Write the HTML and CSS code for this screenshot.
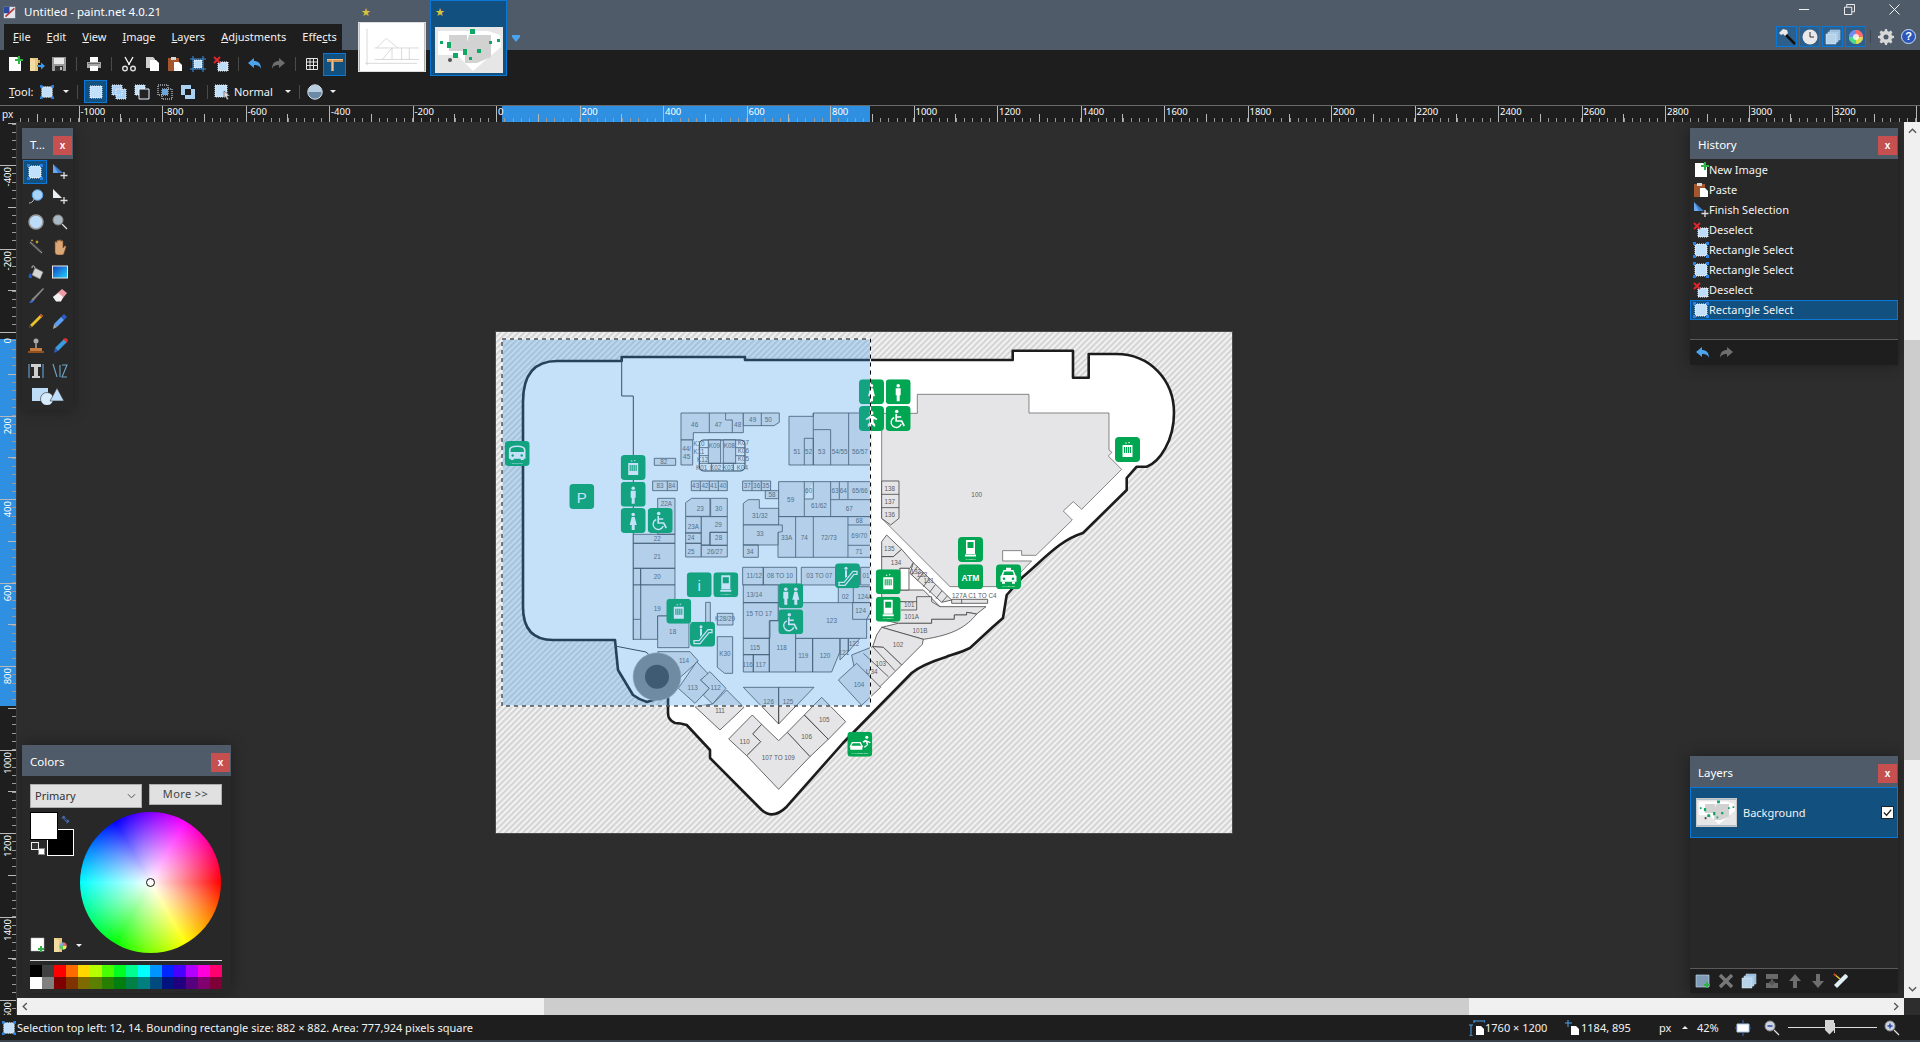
FILE: index.html
```html
<!DOCTYPE html>
<html lang="en">
<head>
<meta charset="utf-8">
<title>Untitled - paint.net 4.0.21</title>
<link rel="stylesheet" href="styles.css">
</head>
<body>
<svg class="defs" width="0" height="0" aria-hidden="true">
<defs>
<symbol id="i-new" viewBox="0 0 16 16"><path d="M2 1h8l4 4v10H2z" fill="#fff"/><path d="M10 1l4 4h-4z" fill="#cfd8dc"/><path d="M11 0h2v3h3v2h-3v3h-2V5H8V3h3z" fill="#2fb344"/></symbol>
<symbol id="i-open" viewBox="0 0 16 16"><path d="M1 2h8v13H1z" fill="#e8c77d"/><path d="M1 2l5 2v11H1z" fill="#f3dca4"/><path d="M9 4h2v3h-2z" fill="#caa45b"/><path d="M8 9h4V6.500l4 3.500-4 3.500V11H8z" fill="#3d9be9"/></symbol>
<symbol id="i-save" viewBox="0 0 16 16"><path d="M1 1h14v14H1z" fill="#9a9a9a"/><path d="M3 2h10v6H3z" fill="#e9e9e9"/><path d="M4 10h8v5H4z" fill="#333"/><path d="M9 11h2v3H9z" fill="#bbb"/></symbol>
<symbol id="i-print" viewBox="0 0 16 16"><path d="M4 1h8v5H4z" fill="#fff"/><path d="M1 6h14v6H1z" fill="#a8a8a8"/><path d="M4 10h8v5H4z" fill="#fff"/><path d="M2 7h12v1H2z" fill="#6a6a6a"/></symbol>
<symbol id="i-cut" viewBox="0 0 16 16"><path d="M4 1l4.500 8M12 1L7.500 9" stroke="#fff" stroke-width="1.300" fill="none"/><circle cx="4" cy="12.500" r="2.300" fill="none" stroke="#ddd" stroke-width="1.400"/><circle cx="12" cy="12.500" r="2.300" fill="none" stroke="#ddd" stroke-width="1.400"/></symbol>
<symbol id="i-copy" viewBox="0 0 16 16"><path d="M2 1h7l2 2v9H2z" fill="#cfcfcf"/><path d="M6 4h6l3 3v8H6z" fill="#fff"/></symbol>
<symbol id="i-paste" viewBox="0 0 16 16"><path d="M1 2h11v13H1z" fill="#a5562c"/><path d="M4 1h5v3H4z" fill="#d8d8d8"/><path d="M7 6h5l3 3v6H7z" fill="#fff"/></symbol>
<symbol id="i-crop" viewBox="0 0 16 16"><path d="M4 4h8v8H4z" fill="#bcdcf7" stroke="#fff" stroke-dasharray="1 1"/><path d="M3 0v16M13 0v16M0 3h16M0 13h16" stroke="#3a8fe0" stroke-width="1" fill="none"/></symbol>
<symbol id="i-desel" viewBox="0 0 16 16"><path d="M5 6h10v9H5z" fill="#bcdcf7" stroke="#fff" stroke-dasharray="1 1"/><path d="M1 1l6 6M7 1L1 7" stroke="#e3262e" stroke-width="1.800"/></symbol>
<symbol id="i-undo" viewBox="0 0 16 16"><path d="M7 2L1 7l6 5V9c4 0 6 1 7 4 0-6-3-8-7-8z" fill="#4aa3ec"/></symbol>
<symbol id="i-redo" viewBox="0 0 16 16"><path d="M9 2l6 5-6 5V9c-4 0-6 1-7 4 0-6 3-8 7-8z" fill="#6e6e6e"/></symbol>
<symbol id="i-grid" viewBox="0 0 16 16"><path d="M2.500 2.500h11v11h-11zM6 2.500v11M9.500 2.500v11M2.500 6h11M2.500 9.500h11" stroke="#e6e6e6" fill="none"/></symbol>
<symbol id="i-ruler" viewBox="0 0 16 16"><path d="M0 3h16v3H7v9H4V6H0z" fill="#d39355"/><path d="M0 3h16v1H6v11H5V4H0z" fill="#efc08e"/></symbol>
<symbol id="i-rect" viewBox="0 0 16 16"><path d="M2 2h12v12H2z" fill="#c3e0fa" stroke="#fff" stroke-dasharray="1 1"/><path d="M0 0h3v3H0zM13 0h3v3h-3zM0 13h3v3H0zM13 13h3v3h-3z" fill="#2a82e4"/></symbol>
<symbol id="i-m1" viewBox="0 0 16 16"><path d="M2 2h12v12H2z" fill="#c3e0fa" stroke="#e8f4ff" stroke-dasharray="1 1"/></symbol>
<symbol id="i-m2" viewBox="0 0 16 16"><path d="M1 1h10v10H1zM5 5h10v10H5z" fill="#a9cff2" stroke="#e8f4ff" stroke-dasharray="1 1"/></symbol>
<symbol id="i-m3" viewBox="0 0 16 16"><path d="M1 1h10v10H1z" fill="#c3e0fa" stroke="#e8f4ff" stroke-dasharray="1 1"/><path d="M5 5h10v10H5z" fill="#222" stroke="#e8f4ff"/></symbol>
<symbol id="i-m4" viewBox="0 0 16 16"><path d="M1 1h10v10H1z" fill="none" stroke="#e8f4ff" stroke-dasharray="1 1"/><path d="M5 5h10v10H5z" fill="none" stroke="#e8f4ff" stroke-dasharray="1 1"/><path d="M5 5h6v6H5z" fill="#6fa6d8"/></symbol>
<symbol id="i-m5" viewBox="0 0 16 16"><path d="M1 1h10v4H5v6H1zM11 5h4v10H5v-4h6z" fill="#a9cff2"/><path d="M5 5h6v6H5z" fill="#1e1e1e"/></symbol>
<symbol id="i-mode" viewBox="0 0 18 16"><path d="M1 1h12v12H1z" fill="#c3e0fa" stroke="#e8f4ff" stroke-dasharray="1 1"/><path d="M10 7l6 5h-3l1.500 3-1.500.8-1.500-3L10 14z" fill="#ddd" stroke="#333" stroke-width=".5"/></symbol>
<symbol id="i-aa" viewBox="0 0 16 16"><circle cx="8" cy="8" r="7.200" fill="#6c89a8" stroke="#dfe7ee"/><path d="M1 8a7 7 0 0 1 14 0z" fill="#b9cee0"/></symbol>
<symbol id="i-movesel" viewBox="0 0 16 16"><path d="M1 0l10 9H1z" fill="#3c7fd0"/><path d="M1 0l5 9H1z" fill="#69a8ea"/><path d="M12 8v7M8.500 11.500h7" stroke="#ddd" stroke-width="1.300"/></symbol>
<symbol id="i-lasso" viewBox="0 0 16 16"><circle cx="9.500" cy="6" r="5.300" fill="#a8d2f7" stroke="#5a9fe0"/><path d="M6 10c-1 3-3 4-5 4" stroke="#bbb" fill="none"/></symbol>
<symbol id="i-ell" viewBox="0 0 16 16"><circle cx="8" cy="8" r="7" fill="#bcdcf7" stroke="#9a9a9a" stroke-width="1.500"/></symbol>
<symbol id="i-zoom" viewBox="0 0 16 16"><circle cx="6" cy="6" r="5" fill="#aab8c4" stroke="#888"/><path d="M10 10l5 5" stroke="#ddd" stroke-width="1.200"/></symbol>
<symbol id="i-move" viewBox="0 0 16 16"><path d="M1 0l9 9H1z" fill="#e9eef3"/><path d="M12 8v7M8.500 11.500h7" stroke="#ddd" stroke-width="1.300"/></symbol>
<symbol id="i-wand" viewBox="0 0 16 16"><path d="M2 3l12 11" stroke="#444" stroke-width="3"/><path d="M2 3l12 11" stroke="#999" stroke-width="1"/><path d="M9 1l.6 1.500L11 3l-1.400.6L9 5l-.6-1.400L7 3l1.400-.5zM4 0l.4 1 1 .4-1 .4-.4 1-.4-1-1-.4 1-.4z" fill="#f2c53d"/></symbol>
<symbol id="i-hand" viewBox="0 0 16 16"><path d="M3 8V3.500a1 1 0 0 1 2 0V2a1 1 0 0 1 2 0v-.2a1 1 0 0 1 2 0V2.500a1 1 0 0 1 2 0V9l1.500-2a1 1 0 0 1 1.500 1L12 14a2 2 0 0 1-2 2H6a3 3 0 0 1-3-3z" fill="#dba777" stroke="#7c4c27" stroke-width=".6"/></symbol>
<symbol id="i-fill" viewBox="0 0 16 16"><path d="M7 4l8 4-3 7-8-4z" fill="#d6d6d6" stroke="#888" stroke-width=".6"/><path d="M7 4c-1-3-3-3-3 0" stroke="#ccc" fill="none"/><path d="M3 9c-2 1-3 3-2 5h3z" fill="#2a5cc8"/></symbol>
<symbol id="i-grad" viewBox="0 0 16 16"><defs><linearGradient id="gr" x1="0" y1="0" x2="1" y2="1"><stop offset="0" stop-color="#0f3fbf"/><stop offset="1" stop-color="#27d3ff"/></linearGradient></defs><rect x=".5" y="2" width="15" height="12" fill="url(#gr)" stroke="#e8e8e8"/></symbol>
<symbol id="i-brush" viewBox="0 0 16 16"><path d="M15 0L5 10l1.500 1.500L16 1z" fill="#8a8a8a"/><path d="M5 10c-2 1-2 3-4 5 3 0 5-1 5.500-3.500z" fill="#3d6fd0"/><path d="M5 10l1.500 1.500-1 1-1.500-1.500z" fill="#c98a33"/></symbol>
<symbol id="i-eraser" viewBox="0 0 16 16"><path d="M10 1l5 4-5.500 7H4L1 9z" fill="#ee9aa7"/><path d="M1 9l5.500-4L11 9l-2 4.500H4z" fill="#f2f2f2"/></symbol>
<symbol id="i-pencil" viewBox="0 0 16 16"><path d="M13 1l2 2L4 14l-3 1 1-3z" fill="#e8c22d"/><path d="M13 1l2 2-1.500 1.500-2-2z" fill="#d04545"/><path d="M1 15l1-3 2 2z" fill="#222"/></symbol>
<symbol id="i-picker" viewBox="0 0 16 16"><path d="M12 1l3 3-3 3-3-3z" fill="#2a5cc8"/><path d="M9 4l3 3-7 7-3-3z" fill="#5d9ff0"/><path d="M2 11l3 3-4 2z" fill="#aaa"/></symbol>
<symbol id="i-stamp" viewBox="0 0 16 16"><circle cx="8" cy="3" r="2.500" fill="#aaa"/><path d="M7 5h2v5H7z" fill="#888"/><path d="M2 10h12v3H2z" fill="#c87b3a"/><path d="M0 13h16v2H0z" fill="#8f5023"/></symbol>
<symbol id="i-recolor" viewBox="0 0 16 16"><path d="M12 1l3 3-9 9-3-3z" fill="#3b9be0"/><path d="M11 1l4 4 1-3-2-2z" fill="#d33"/><path d="M3 10l3 3-4 2z" fill="#2a5cc8"/></symbol>
<symbol id="i-text" viewBox="0 0 16 16"><path d="M1 1v14M15 1v14" stroke="#6fb0ea" fill="none"/><path d="M3 1h10v3h-3v9h2v2H4v-2h2V4H3z" fill="#cfcfcf"/></symbol>
<symbol id="i-line" viewBox="0 0 16 16"><path d="M1 1l4 13M8 14V2M10 2h5l-5 12h5" stroke="#6fa6c6" stroke-width="1.100" fill="none"/></symbol>
<symbol id="i-shapes" viewBox="0 0 34 18"><path d="M1 1h16v13H1z" fill="#bcdcf7"/><circle cx="16" cy="12" r="6.500" fill="#d6ecfd" stroke="#2e2e2e" stroke-width=".6"/><path d="M26 1l7 13H19z" fill="#bcdcf7" stroke="#2e2e2e" stroke-width=".6"/></symbol>
<symbol id="i-hammer" viewBox="0 0 18 18"><path d="M6 5l11 11" stroke="#111" stroke-width="2.500"/><path d="M1 5l4-4 4 1 1 3-3 3-2-2-2 1z" fill="#e9e9e9"/></symbol>
<symbol id="i-clock" viewBox="0 0 16 16"><circle cx="8" cy="8" r="7.500" fill="#e9e9e9"/><path d="M8 3v5h4" stroke="#333" stroke-width="1" fill="none"/></symbol>
<symbol id="i-layers" viewBox="0 0 16 16"><path d="M5 1h10v10H5z" fill="#8fb4d6" stroke="#cfe2f2" stroke-width=".5"/><path d="M3 3h10v10H3z" fill="#a3c5e2" stroke="#cfe2f2" stroke-width=".5"/><path d="M1 5h10v10H1z" fill="#b7d3ea" stroke="#e2eef8" stroke-width=".5"/></symbol>
<symbol id="i-wheel" viewBox="0 0 16 16"><circle cx="8" cy="8" r="7" fill="#dd88dd"/><path d="M8 8L8 1a7 7 0 0 1 7 7z" fill="#ff6b6b"/><path d="M8 8h7a7 7 0 0 1-7 7z" fill="#d8e14c"/><path d="M8 8v7a7 7 0 0 1-7-7z" fill="#49dc8a"/><path d="M8 8H1a7 7 0 0 1 7-7z" fill="#6d8df0"/><circle cx="8" cy="8" r="3" fill="#fff" opacity=".8"/></symbol>
<symbol id="i-gear" viewBox="0 0 16 16"><path d="M7 0h2l.4 2 1.600.7L12.700 1.500l1.800 1.800-1.200 1.700.7 1.600 2 .4v2l-2 .4-.7 1.600 1.200 1.700-1.800 1.800-1.700-1.200-1.600.7-.4 2H7l-.4-2-1.600-.7-1.700 1.200L1.500 12.700l1.200-1.700L2 9.400 0 9V7l2-.4.7-1.600L1.500 3.300l1.800-1.800L5 2.700l1.600-.7z" fill="#d8d8d8"/><circle cx="8" cy="8" r="2.500" fill="#4f5a68"/></symbol>
<symbol id="i-dim" viewBox="0 0 16 16"><path d="M5 1h11M5 0v3M16 0v3M2 5v11M0 5h4M0 16h4" stroke="#4aa3ec" fill="none"/><path d="M7 6h5l3 3v6H7z" fill="#fff"/></symbol>
<symbol id="i-pos" viewBox="0 0 16 16"><path d="M3 0v7M0 3h7" stroke="#4aa3ec" fill="none"/><path d="M6 6h5l3 3v6H6z" fill="#fff"/></symbol>
<symbol id="i-fit" viewBox="0 0 16 16"><path d="M2 4h12v8H2z" fill="#fff" stroke="#a8c8ee"/><path d="M8 0v3M8 13v3M0 8h2M14 8h2" stroke="#3a66d0"/></symbol>
<symbol id="i-zo" viewBox="0 0 16 16"><circle cx="6" cy="6" r="5" fill="#cdd6e0" stroke="#8b8b8b"/><path d="M3.500 6h5" stroke="#2b4aa8" stroke-width="1.500"/><path d="M10 10l5 5" stroke="#ddd" stroke-width="1.200"/></symbol>
<symbol id="i-zi" viewBox="0 0 16 16"><circle cx="6" cy="6" r="5" fill="#cdd6e0" stroke="#8b8b8b"/><path d="M3.500 6h5M6 3.500v5" stroke="#2b4aa8" stroke-width="1.500"/><path d="M10 10l5 5" stroke="#ddd" stroke-width="1.200"/></symbol>
<symbol id="i-lnew" viewBox="0 0 16 16"><path d="M1 2h13v12H1z" fill="#7f9bb5" stroke="#cfe2f2" stroke-width=".6"/><path d="M11 9h2v2h2v2h-2v2h-2v-2H9v-2h2z" fill="#2fb344"/></symbol>
<symbol id="i-ldel" viewBox="0 0 16 16"><path d="M2 2l12 12M14 2L2 14" stroke="#777" stroke-width="3.500"/></symbol>
<symbol id="i-lmerge" viewBox="0 0 16 16"><path d="M2 1h12v5H2zM2 10h12v5H2z" fill="#6a6a6a"/><path d="M8 5v6M5.500 8.500L8 11l2.500-2.500" stroke="#555" stroke-width="2" fill="none"/></symbol>
<symbol id="i-lup" viewBox="0 0 16 16"><path d="M8 1l6 7h-4v7H6V8H2z" fill="#6e6e6e"/></symbol>
<symbol id="i-ldown" viewBox="0 0 16 16"><path d="M8 15l6-7h-4V1H6v7H2z" fill="#6e6e6e"/></symbol>
<symbol id="i-lprop" viewBox="0 0 16 16"><path d="M14 2l-2-1L1 12l3 3L15 4z" fill="#dff0f7"/><path d="M1 1l6 5" stroke="#e8c22d" stroke-width="1.600"/><path d="M1 1l2 1.700" stroke="#d33" stroke-width="1.600"/></symbol>
<symbol id="i-sw" viewBox="0 0 16 16"><path d="M1 1h13v13H1z" fill="#fff" stroke="#bbb" stroke-width=".5"/><path d="M10 9h2v2h2v2h-2v2h-2v-2H8v-2h2z" fill="#2fb344"/></symbol>
<symbol id="i-pal" viewBox="0 0 16 16"><path d="M1 1h8v14H1z" fill="#e8c77d"/><path d="M1 1l5 2v12H1z" fill="#f3dca4"/><circle cx="10" cy="9" r="3.500" fill="#8ac"/><path d="M10 9V5.500a3.500 3.500 0 0 1 3.500 3.500z" fill="#e66"/><path d="M10 9h3.500a3.500 3.500 0 0 1-3.500 3.500z" fill="#ee6"/><path d="M10 9v3.500A3.500 3.500 0 0 1 6.500 9z" fill="#5c5"/></symbol>
<symbol id="i-appicon" viewBox="0 0 16 16"><path d="M1 1h14v14H1z" fill="#dfe6ee"/><path d="M1 1h7v8H1z" fill="#2a4aa0"/><path d="M3 13L14 3" stroke="#b33" stroke-width="2"/></symbol>
<symbol id="t-map" viewBox="0 0 68 46"><path d="M0 0h68v46H0z" fill="#e6e6e6"/><path d="M3 4h50l12 4 1 12-28 24L22 28H3z" fill="#fff"/><path d="M14 8h18v16H14zM34 8h22v22L42 36H30V22z" fill="#d2d2d2"/><path d="M5 14h3v3H5zM12 15h4v6h-4zM35 2h5v5h-5zM18 26h5v5h-5zM28 22h4v6h-4zM42 22h4v4h-4zM54 14h3v3h-3zM34 30h3v3h-3zM62 12h3v3h-3z" fill="#11a866"/><circle cx="15" cy="33" r="2" fill="#555"/></symbol>
<symbol id="t-plan" viewBox="0 0 68 50"><path d="M0 0h68v50H0z" fill="#fff"/><path d="M8 6v38M6 42h54M16 26h46M16 38h46M34 26v12M44 26v12M52 26v12M18 26l10-10 12 10M24 38l10-12" stroke="#cfcfcf" stroke-width=".8" fill="none"/></symbol>

<pattern id="hatch" width="4.200" height="4.200" patternUnits="userSpaceOnUse" patternTransform="rotate(-45)"><rect width="4.200" height="4.200" fill="#f2f2f2"/><rect width="4.200" height="2.100" fill="#d4d4d4"/></pattern>

<symbol id="g-base" viewBox="0 0 25 25"><rect width="25" height="25" rx="4" fill="#00a651"/></symbol>
<symbol id="g-lift" viewBox="0 0 25 25"><rect width="25" height="25" rx="4" fill="#00a651"/><path d="M7.500 8h10v12h-10z" fill="#fff"/><path d="M9 10h7v6H9z" fill="#00a651"/><path d="M10.500 10v6M12.500 10v6M14.500 10v6" stroke="#fff" stroke-width=".8"/><path d="M10 6.500l1-1.500 1 1.500zM13 5l1 1.500L15 5z" fill="#fff"/></symbol>
<symbol id="g-male" viewBox="0 0 25 25"><rect width="25" height="25" rx="4" fill="#00a651"/><circle cx="12.500" cy="6.500" r="1.800" fill="#fff"/><path d="M10 9h5v7h-1v6h-3v-6h-1z" fill="#fff"/></symbol>
<symbol id="g-female" viewBox="0 0 25 25"><rect width="25" height="25" rx="4" fill="#00a651"/><circle cx="12.500" cy="6.500" r="1.800" fill="#fff"/><path d="M11 9h3l2 8h-2v5h-3v-5H9z" fill="#fff"/></symbol>
<symbol id="g-baby" viewBox="0 0 25 25"><rect width="25" height="25" rx="4" fill="#00a651"/><circle cx="12.500" cy="7" r="2" fill="#fff"/><path d="M10.500 10h4l4 3-1 1-3-1v3l2 3-1 2-3-3-3 3-1-2 2-3v-3l-3 1-1-1z" fill="#fff"/></symbol>
<symbol id="g-dis" viewBox="0 0 25 25"><rect width="25" height="25" rx="4" fill="#00a651"/><circle cx="11" cy="5.500" r="1.800" fill="#fff"/><path d="M10.500 8v7h5.500l2.500 5" stroke="#fff" stroke-width="1.700" fill="none"/><path d="M10.500 11h5" stroke="#fff" stroke-width="1.400"/><path d="M8.500 11.500a5.200 5.200 0 1 0 7 6.500" stroke="#fff" stroke-width="1.400" fill="none"/></symbol>
<symbol id="g-kiosk" viewBox="0 0 25 25"><rect width="25" height="25" rx="4" fill="#00a651"/><path d="M8 3h9v14H8z" fill="#fff"/><path d="M9.500 5h6v6h-6z" fill="#00a651"/><path d="M7 17.500h11v2H7z" fill="#fff"/><text x="12.500" y="22.500" class="tiny">CARTEXT</text></symbol>
<symbol id="g-esc" viewBox="0 0 25 25"><rect width="25" height="25" rx="4" fill="#00a651"/><path d="M4 19h5L18 8h4v3h-3l-9 11H4z" fill="none" stroke="#fff" stroke-width="1.300"/><circle cx="11" cy="5" r="1.500" fill="#fff"/><path d="M10 7h2v6l-2 2z" fill="#fff"/></symbol>
<symbol id="g-bus" viewBox="0 0 25 25"><rect width="25" height="25" rx="4" fill="#00a651"/><path d="M5 9c0-5 15-5 15 0v8H5z" fill="none" stroke="#fff" stroke-width="1.600"/><path d="M5 11h15v6H5z" fill="#fff"/><circle cx="8" cy="14.500" r="1.200" fill="#00a651"/><circle cx="17" cy="14.500" r="1.200" fill="#00a651"/><path d="M6 17h3v2H6zM16 17h3v2h-3z" fill="#fff"/><text x="12.500" y="23" class="tiny">BUS STOP</text></symbol>
<symbol id="g-taxi" viewBox="0 0 25 25"><rect width="25" height="25" rx="4" fill="#00a651"/><path d="M10 3.500h5V6h-5z" fill="#fff"/><path d="M8 6.500h9l2 5H6z" fill="none" stroke="#fff" stroke-width="1.500"/><path d="M4.500 11.500h16v6h-16z" fill="#fff"/><circle cx="8" cy="14.500" r="1.300" fill="#00a651"/><circle cx="17" cy="14.500" r="1.300" fill="#00a651"/><path d="M6 17.500h3v2H6zM16 17.500h3v2h-3z" fill="#fff"/><text x="12.500" y="23" class="tiny">TAXI STAND</text></symbol>
<symbol id="g-exit" viewBox="0 0 25 25"><rect width="25" height="25" rx="4" fill="#00a651"/><path d="M5 11h8l2 4H3z" fill="none" stroke="#fff" stroke-width="1.200"/><path d="M3 14h12v4H3z" fill="#fff"/><circle cx="19.500" cy="5.500" r="1.500" fill="#fff"/><path d="M18 8l-3 2 1.500 1 2-1 1 3-3 2 1 1 3.500-3-.8-3 2 1.500 1.500-1z" fill="#fff"/><text x="12.500" y="22.500" class="tiny">TAXI DROP OFF</text></symbol>
<symbol id="g-wc" viewBox="0 0 25 25"><rect width="25" height="25" rx="4" fill="#00a651"/><circle cx="7.500" cy="6" r="1.800" fill="#fff"/><path d="M5 8.500h5v7H9v6H6v-6H5z" fill="#fff"/><circle cx="17.500" cy="6" r="1.800" fill="#fff"/><path d="M16 8.500h3l2 8h-2v5h-3v-5h-2z" fill="#fff"/></symbol>
</defs>
</svg>

<div class="app">
  <header class="titlebar">
    <div class="title-left">
      <div class="title-row"><svg class="ic16"><use href="#i-appicon"/></svg><span class="title-text">Untitled - paint.net 4.0.21</span></div>
      <nav class="menu"><span><u>F</u>ile</span><span><u>E</u>dit</span><span><u>V</u>iew</span><span><u>I</u>mage</span><span><u>L</u>ayers</span><span><u>A</u>djustments</span><span>Effe<u>c</u>ts</span></nav>
    </div>
    <div class="doc-tab"><span class="star">★</span><svg class="thumb-plan"><use href="#t-plan"/></svg></div>
    <div class="doc-tab doc-active"><span class="star">★</span><svg class="thumb-map"><use href="#t-map"/></svg></div>
    <div class="tab-more"><span class="tab-more-caret"></span></div>
    <div class="title-right">
      <div class="winbtns">
        <svg class="win" viewBox="0 0 12 12"><path d="M0 6h11" stroke="#fff"/></svg>
        <svg class="win" viewBox="0 0 12 12"><path d="M.500 3.500h8v8h-8zM3 3V.500h8.500v8H9" stroke="#fff" fill="none"/></svg>
        <svg class="win" viewBox="0 0 12 12"><path d="M.500.500l11 11M11.500.500l-11 11" stroke="#fff" fill="none"/></svg>
      </div>
      <div class="wintools">
        <span class="toggle"><svg class="ic18"><use href="#i-hammer"/></svg></span>
        <span class="toggle"><svg class="ic16"><use href="#i-clock"/></svg></span>
        <span class="toggle"><svg class="ic16"><use href="#i-layers"/></svg></span>
        <span class="toggle"><svg class="ic16"><use href="#i-wheel"/></svg></span>
        <span class="tsep"></span>
        <svg class="ic16 gear"><use href="#i-gear"/></svg>
        <span class="help">?</span>
      </div>
    </div>
  </header>

  <div class="toolbar tb1">
    <span class="b b22"><svg class="ic16"><use href="#i-new"/></svg></span>
    <span class="b b22"><svg class="ic16"><use href="#i-open"/></svg></span>
    <span class="b b22"><svg class="ic16"><use href="#i-save"/></svg></span>
    <span class="sep s12"></span>
    <span class="b"><svg class="ic16"><use href="#i-print"/></svg></span>
    <span class="sep s12"></span>
    <span class="b"><svg class="ic16"><use href="#i-cut"/></svg></span>
    <span class="b"><svg class="ic16"><use href="#i-copy"/></svg></span>
    <span class="b"><svg class="ic16"><use href="#i-paste"/></svg></span>
    <span class="b"><svg class="ic16"><use href="#i-crop"/></svg></span>
    <span class="b"><svg class="ic16"><use href="#i-desel"/></svg></span>
    <span class="sep s11"></span>
    <span class="b"><svg class="ic16"><use href="#i-undo"/></svg></span>
    <span class="b"><svg class="ic16"><use href="#i-redo"/></svg></span>
    <span class="sep s11"></span>
    <span class="b"><svg class="ic16"><use href="#i-grid"/></svg></span>
    <span class="b on"><svg class="ic16"><use href="#i-ruler"/></svg></span>
  </div>
  <div class="toolbar tb2">
    <span class="tool-label"><u>T</u>ool:</span>
    <span class="b b16"><svg class="ic14"><use href="#i-rect"/></svg></span>
    <span class="caret c-tool"></span>
    <span class="sep s-a"></span>
    <span class="b on"><svg class="ic16"><use href="#i-m1"/></svg></span>
    <span class="b"><svg class="ic16"><use href="#i-m2"/></svg></span>
    <span class="b"><svg class="ic16"><use href="#i-m3"/></svg></span>
    <span class="b"><svg class="ic16"><use href="#i-m4"/></svg></span>
    <span class="b"><svg class="ic16"><use href="#i-m5"/></svg></span>
    <span class="sep s-b"></span>
    <svg class="ic-mode"><use href="#i-mode"/></svg>
    <span class="mode-text">Normal</span>
    <span class="caret c-mode"></span>
    <span class="sep s-c"></span>
    <svg class="ic16 ic-aa"><use href="#i-aa"/></svg>
    <span class="caret c-aa"></span>
  </div>

  <main class="stage">
    <div class="corner">px</div>
    <div class="ruler-h">
      <div class="band-h"></div>
      <div class="hmarks">
        <span class="hm"></span><span class="hm">-1000</span><span class="hm">-800</span><span class="hm">-600</span><span class="hm">-400</span><span class="hm">-200</span><span class="hm">0</span><span class="hm">200</span><span class="hm">400</span><span class="hm">600</span><span class="hm">800</span><span class="hm">1000</span><span class="hm">1200</span><span class="hm">1400</span><span class="hm">1600</span><span class="hm">1800</span><span class="hm">2000</span><span class="hm">2200</span><span class="hm">2400</span><span class="hm">2600</span><span class="hm">2800</span><span class="hm">3000</span><span class="hm">3200</span><span class="hm"></span>
      </div>
    </div>
    <div class="ruler-v">
      <div class="band-v"></div>
      <div class="vmarks">
        <div class="vm"></div><div class="vm"><span>-400</span></div><div class="vm"><span>-200</span></div><div class="vm"><span>0</span></div><div class="vm"><span>200</span></div><div class="vm"><span>400</span></div><div class="vm"><span>600</span></div><div class="vm"><span>800</span></div><div class="vm"><span>1000</span></div><div class="vm"><span>1200</span></div><div class="vm"><span>1400</span></div><div class="vm"><span>1600</span></div>
      </div>
    </div>

    <section class="workspace">
      <svg class="canvas" viewBox="496 332 736 501" width="736" height="501">
        <rect x="496" y="332" width="736" height="501" fill="url(#hatch)"/>
        <path class="outline" d="M557 361L621.700 361L621.700 357L745 357L745 360L1012.700 360L1012.700 350.700L1073 350.700L1073 377.700L1088.700 377.700L1088.700 354L1116 354C1150 354 1174 380 1174 413C1174 440 1160 462 1146.700 466.700L1136.700 466.700L1126.700 478L1126.700 490L1083 533C1060 540 1045 558 1023 576.700L1006.700 595L1003 618L993 626.700L970 648C960 653 950 655 946.700 656.700C930 662 920 666 911.700 673L843 743L786.700 806.700Q773 820 761.700 810L710 758L710 750L686.700 725Q680 723 675 723Q668 720 668 713L668 695L647 702C640 700 637 698 633 695L618 670L615 640L553 640Q523 640 523 607L523 401.700Q523 361 557 361Z"/>
        <path class="thin" d="M621.700 360V396H633.300V640M615 646L646 652L655 660"/>

        <g transform="translate(860 325) scale(.3333)" class="units">
          <path class="u2" d="M172 265V208H507V264H747V375L756 382L745 393L785 433L665 553L640 530L610 558L637 585L528 691H485V677H428V708H515L440 785H270L65 580V265Z"/>
          <path d="M65 468H117V580L92 600L65 580ZM65 508H117M65 548H117"/>
          <text x="350" y="515">100</text><text x="89" y="497">138</text><text x="89" y="537">137</text><text x="89" y="577">136</text>
        </g>
        <g transform="translate(860 540) scale(.3333)" class="units">
          <path d="M65 5L80-15L125 28L100 50H65Z"/>
          <path d="M65 50H100L125 28L160 68L150 85H120V150H190L240 200V205L123 185H65Z"/>
          <path class="wh" d="M120 85H147V150H120Z"/>
          <path d="M160 68L275 180L245 187L150 100Z"/>
          <path class="ln" d="M172 80L155 105M190 98L172 122M208 116L190 140M226 134L208 158M246 152L228 176M262 168L246 186"/>
          <path d="M275 178H383V190H275ZM305 178V190"/>
          <path d="M123 185H170V170H215V185L240 200H378L350 222L320 217V225H283V238H215V250H115L70 240L65 185Z"/>
          <path class="ln" d="M123 210H170V185"/>
          <path d="M65 262L115 250H215V238H283V225H320V217L350 222C320 260 280 285 190 298Z"/>
          <path d="M65 262L190 298L187 313L125 375L70 322L38 320L50 285Z"/>
          <path d="M-25 345L38 320L70 322L125 375L60 440L0 470Z"/>
          <path class="ln" d="M38 320L105 392M10 340L85 410"/>
          <text x="88" y="34">135</text><text x="108" y="74">134</text><text x="148" y="202">101</text><text x="155" y="237">101A</text><text x="180" y="279">101B</text><text x="114" y="320">102</text><text x="62" y="378">103</text><text x="343" y="175">127A C1 TO C4</text><text x="167" y="102">133</text><text x="186" y="112">132</text><text x="206" y="130">131</text>
        </g>

        <g transform="translate(490 325) scale(.3333)" class="units">
          <path d="M573 264H760V323H610V345H573ZM658 264V323M707 264V285H727V323"/>
          <path d="M573 345H608V420H573Z"/>
          <path d="M760 264H868V292L852 302H760ZM814 264V302"/>
          <path class="kiosk" d="M642 345H750Q765 345 765 360V423Q765 438 750 438H642Q628 438 628 423V360Q628 345 642 345Z"/>
          <path d="M655 345H692V415H655ZM700 345H737V415H700Z"/>
          <path class="ln" d="M628 368H655M628 392H655M628 415H765M737 368H765M737 392H765M665 415V438M700 415V438M730 415V438"/>
          <path d="M493 400H557V421H493Z"/>
          <path d="M488 468H562V497H488ZM532 468V497"/>
          <path d="M604 468H712V497H604ZM631 468V497M658 468V497M685 468V497"/>
          <path d="M758 468H842V497H758ZM786 468V497M814 468V497"/>
          <path d="M826 497H866V521H826Z"/>
          <path d="M897 274H970V264H1142V420H897ZM943 340H970V420M943 340V420M970 264V420M970 314H1022V420M1076 264V420"/>
          <path d="M866 470H1142V575H866ZM943 470V575M943 522H970V470M1022 470V575M1048 470V522M1074 470V522M1022 524H1142"/>
          <path d="M864 575H1142V697H864ZM917 575V697M970 575V697M1074 575V697M1074 600H1142M1074 661H1142"/>
          <path d="M760 535L775 524H808V550H866V600H760Z"/>
          <path d="M760 600H877V620L864 622V660H760ZM760 660H805V697H760Z"/>
          <path d="M587 533L605 520H660V574H587ZM662 520H712V575H662Z"/>
          <path d="M587 575H634V624H587ZM587 624H634V655H587ZM587 655H634V696H587Z"/>
          <path d="M634 575H712V622H660V660H634ZM660 622H712V661H660ZM634 661H712V696H634Z"/>
          <path d="M503 520H555V628H503ZM430 628H555V655H430ZM430 655H555V730H430ZM452 730H555V780H452ZM430 730H452V780H430Z"/>
          <path d="M758 727H820V780H758ZM820 727H920V780H820ZM934 727H1040V780H934ZM1112 727H1142V780H1112Z"/>
          <g>
            <text x="614" y="305">46</text><text x="685" y="305">47</text><text x="743" y="305">48</text><text x="788" y="290">49</text><text x="835" y="290">50</text><text x="590" y="378">44/</text><text x="590" y="402">45</text>
            <text x="627" y="362">K10</text><text x="627" y="386">K11</text><text x="638" y="410">K12</text><text x="635" y="436">K01</text><text x="677" y="436">K02</text><text x="715" y="436">K03</text><text x="757" y="436">K04</text><text x="760" y="409">K05</text><text x="760" y="385">K06</text><text x="760" y="361">K07</text><text x="673" y="368">K09</text><text x="718" y="368">K08</text>
            <text x="521" y="417">82</text><text x="510" y="489">83</text><text x="545" y="489">84</text><text x="617" y="489">43</text><text x="645" y="489">42</text><text x="671" y="489">41</text><text x="699" y="489">40</text><text x="772" y="489">37</text><text x="800" y="489">36</text><text x="827" y="489">35</text><text x="846" y="515">58</text>
            <text x="921" y="387">51</text><text x="956" y="387">52</text><text x="995" y="387">53</text><text x="1049" y="387">54/55</text><text x="1110" y="387">56/57</text>
            <text x="902" y="531">59</text><text x="956" y="503">60</text><text x="987" y="548">61/62</text><text x="1035" y="503">63</text><text x="1060" y="503">64</text><text x="1110" y="503">65/66</text><text x="1078" y="557">67</text><text x="1108" y="595">68</text><text x="1108" y="638">69/70</text><text x="1107" y="686">71</text>
            <text x="810" y="580">31/32</text><text x="810" y="633">33</text><text x="890" y="646">33A</text><text x="943" y="646">74</text><text x="1017" y="646">72/73</text><text x="780" y="686">34</text>
            <text x="631" y="557">23</text><text x="686" y="557">30</text><text x="610" y="611">23A</text><text x="603" y="646">24</text><text x="603" y="686">25</text><text x="685" y="606">29</text><text x="686" y="646">28</text><text x="675" y="686">26/27</text>
            <text x="529" y="544">22A</text><text x="502" y="647">22</text><text x="502" y="703">21</text><text x="502" y="763">20</text>
            <text x="793" y="760">11/12</text><text x="870" y="760">08 TO 10</text><text x="988" y="760">03 TO 07</text><text x="1128" y="760">01</text>
          </g>
        </g>
        <g transform="translate(490 580) scale(.3333)" class="units">
          <path d="M760 15H865V68H760ZM760 68H865V122H840V175H760ZM760 175H838V224H760ZM760 224H790V276H760ZM790 224H838V276H790ZM838 122H917V276H838Z"/>
          <path d="M917 175H968V276H917ZM968 175H1050V215L1025 276H968ZM1050 175H1075V215L1050 240ZM1075 175H1110L1075 215Z"/>
          <path d="M865 68H1045V20H1142V118H1130V175H917V122H865Z"/>
          <path class="ln" d="M1090 20V68M1045 68H1142"/>
          <path d="M1088 68H1142V95L1130 118H1088Z"/>
          <path d="M452 15H555V108H503V178H452Z"/>
          <path d="M503 108H597V203H503Z"/>
          <path d="M430 15H452V178H430ZM430 118H452"/>
          <path d="M647 67H661V127H647ZM682 100H729V135H682ZM682 170H728V280H704L682 262Z"/>
          <path d="M503 215H600L625 243L570 293Z"/>
          <path d="M565 325L620 245L658 285L632 300L658 325L615 370Z"/>
          <path d="M632 300L660 275L708 325L668 372L640 345L658 325Z"/>
          <path d="M615 380L668 372L710 330L762 382L690 450Z"/>
          <path d="M760 322H866V432ZM866 322H972L866 432Z"/>
          <path d="M943 405L995 352L1067 425L1015 478ZM892 457L943 405L1015 478L960 530Z"/>
          <path d="M866 482L892 457L960 530L866 628L770 527L812 485L788 462L815 433Z"/>
          <path d="M716 477L787 405L815 433L788 462L812 485L770 527Z"/>
          <path d="M1045 300L1100 250L1172 322L1115 376Z"/>
          <text x="793" y="50">13/14</text><text x="807" y="107">15 TO 17</text><text x="795" y="210">115</text><text x="773" y="261">116</text><text x="812" y="261">117</text><text x="875" y="210">118</text><text x="940" y="235">119</text><text x="1005" y="235">120</text><text x="1062" y="226">121</text><text x="1092" y="197">122</text><text x="1025" y="130">123</text><text x="1066" y="58">02</text><text x="1125" y="58">124A</text><text x="1112" y="100">124</text>
          <text x="502" y="92">19</text><text x="548" y="162">18</text><text x="705" y="124">K28/29</text><text x="705" y="227">K30</text>
          <text x="582" y="248">114</text><text x="608" y="330">113</text><text x="677" y="330">112</text><text x="690" y="398">111</text><text x="836" y="371">126</text><text x="894" y="371">125</text><text x="1003" y="425">105</text><text x="950" y="477">106</text><text x="865" y="541">107 TO 109</text><text x="764" y="493">110</text><text x="1107" y="320">104</text><text x="1145" y="282">U34</text>
        </g>
        <circle cx="657" cy="676.700" r="24" fill="#848484" stroke="#bdbdbd" stroke-width=".6"/>
        <circle cx="657" cy="676.700" r="12" fill="#3f3f3f"/>

        <use href="#g-bus" x="504.700" y="441" width="25" height="25"/>
        <g><use href="#g-base" x="569.300" y="484" width="25" height="25"/><text class="gl" x="581.800" y="502.500">P</text></g>
        <use href="#g-lift" x="620.700" y="455" width="25" height="25"/>
        <use href="#g-male" x="620.700" y="481.700" width="25" height="25"/>
        <use href="#g-female" x="620.700" y="508" width="25" height="25"/>
        <use href="#g-dis" x="647.700" y="508" width="25" height="25"/>
        <use href="#g-female" x="859" y="379.300" width="25" height="25"/>
        <use href="#g-male" x="885.700" y="379.300" width="25" height="25"/>
        <use href="#g-baby" x="859" y="406" width="25" height="25"/>
        <use href="#g-dis" x="885.700" y="406" width="25" height="25"/>
        <use href="#g-lift" x="1115" y="437" width="25" height="25"/>
        <use href="#g-kiosk" x="958" y="537" width="25" height="25"/>
        <g><use href="#g-base" x="958" y="564.300" width="25" height="25"/><text class="gl atm" x="970.500" y="580.500">ATM</text></g>
        <use href="#g-taxi" x="996" y="564.300" width="25" height="25"/>
        <use href="#g-lift" x="875.700" y="569.300" width="25" height="25"/>
        <use href="#g-kiosk" x="875.700" y="596.700" width="25" height="25"/>
        <g><use href="#g-base" x="686.700" y="572.300" width="25" height="25"/><text class="gl" x="699.200" y="591">i</text></g>
        <use href="#g-kiosk" x="713.300" y="572.300" width="25" height="25"/>
        <use href="#g-esc" x="835" y="563.300" width="25" height="25"/>
        <use href="#g-wc" x="778.300" y="583.300" width="25" height="25"/>
        <use href="#g-dis" x="778.300" y="609.300" width="25" height="25"/>
        <use href="#g-lift" x="666.300" y="598.700" width="25" height="25"/>
        <use href="#g-esc" x="690" y="621.700" width="25" height="25"/>
        <use href="#g-exit" x="847.300" y="731.700" width="25" height="25"/>

        <rect x="502" y="339" width="368.500" height="367" fill="#3f9aed" opacity=".3"/>
        <rect class="sel1" x="502" y="339" width="368.500" height="367"/>
        <rect class="sel2" x="502" y="339" width="368.500" height="367"/>
      </svg>

      <aside class="panel tools">
        <div class="ptitle"><span>T...</span><b class="pclose">x</b></div>
        <div class="toolgrid">
          <span class="tc on"><svg class="ic16"><use href="#i-rect"/></svg></span><span class="tc"><svg class="ic16"><use href="#i-movesel"/></svg></span>
          <span class="tc"><svg class="ic16"><use href="#i-lasso"/></svg></span><span class="tc"><svg class="ic16"><use href="#i-move"/></svg></span>
          <span class="tc"><svg class="ic16"><use href="#i-ell"/></svg></span><span class="tc"><svg class="ic16"><use href="#i-zoom"/></svg></span>
          <span class="tc"><svg class="ic16"><use href="#i-wand"/></svg></span><span class="tc"><svg class="ic16"><use href="#i-hand"/></svg></span>
          <span class="tc"><svg class="ic16"><use href="#i-fill"/></svg></span><span class="tc"><svg class="ic16"><use href="#i-grad"/></svg></span>
          <span class="tc"><svg class="ic16"><use href="#i-brush"/></svg></span><span class="tc"><svg class="ic16"><use href="#i-eraser"/></svg></span>
          <span class="tc"><svg class="ic16"><use href="#i-pencil"/></svg></span><span class="tc"><svg class="ic16"><use href="#i-picker"/></svg></span>
          <span class="tc"><svg class="ic16"><use href="#i-stamp"/></svg></span><span class="tc"><svg class="ic16"><use href="#i-recolor"/></svg></span>
          <span class="tc"><svg class="ic16"><use href="#i-text"/></svg></span><span class="tc"><svg class="ic16"><use href="#i-line"/></svg></span>
          <span class="tc tc-wide"><svg class="ic-shapes"><use href="#i-shapes"/></svg></span>
        </div>
      </aside>

      <aside class="panel colors">
        <div class="ptitle"><span>Colors</span><b class="pclose">x</b></div>
        <div class="cbody">
          <div class="crow">
            <div class="select"><span>Primary</span><svg class="chev" viewBox="0 0 10 6"><path d="M1 1l4 4 4-4" fill="none" stroke="#444"/></svg></div>
            <div class="morebtn">More &gt;&gt;</div>
          </div>
          <div class="cmain">
            <div class="cleft">
              <div class="swatches">
                <span class="sw-black"></span><span class="sw-white"></span>
                <svg class="sw-swap" viewBox="0 0 10 10"><path d="M1 4l2-3 2 3M3 2c0 4 2 5 5 5M6 5l3 2-3 2" stroke="#4e7fe0" fill="none"/></svg>
                <span class="sw-r1"></span><span class="sw-r2"></span>
              </div>
              <div class="cactions"><svg class="ic16"><use href="#i-sw"/></svg><svg class="ic16"><use href="#i-pal"/></svg><span class="caret"></span></div>
            </div>
            <div class="wheel"><span class="wheel-dot"></span></div>
          </div>
          <div class="palette">
            <i style="background:#000"></i><i style="background:#404040"></i><i style="background:#f00"></i><i style="background:#ff6a00"></i><i style="background:#ffd800"></i><i style="background:#b6ff00"></i><i style="background:#4cff00"></i><i style="background:#00ff21"></i><i style="background:#00ff90"></i><i style="background:#0ff"></i><i style="background:#0094ff"></i><i style="background:#0026ff"></i><i style="background:#4800ff"></i><i style="background:#b200ff"></i><i style="background:#ff00dc"></i><i style="background:#ff006e"></i>
            <i style="background:#fff"></i><i style="background:#808080"></i><i style="background:#7f0000"></i><i style="background:#7f3300"></i><i style="background:#7f6a00"></i><i style="background:#5b7f00"></i><i style="background:#267f00"></i><i style="background:#007f0e"></i><i style="background:#007f46"></i><i style="background:#007f7f"></i><i style="background:#004a7f"></i><i style="background:#00137f"></i><i style="background:#21007f"></i><i style="background:#57007f"></i><i style="background:#7f006e"></i><i style="background:#7f0037"></i>
          </div>
        </div>
      </aside>

      <aside class="panel history">
        <div class="ptitle"><span>History</span><b class="pclose">x</b></div>
        <ul class="hlist">
          <li><svg class="ic16"><use href="#i-new"/></svg>New Image</li>
          <li><svg class="ic16"><use href="#i-paste"/></svg>Paste</li>
          <li><svg class="ic16"><use href="#i-movesel"/></svg>Finish Selection</li>
          <li><svg class="ic16"><use href="#i-desel"/></svg>Deselect</li>
          <li><svg class="ic16"><use href="#i-rect"/></svg>Rectangle Select</li>
          <li><svg class="ic16"><use href="#i-rect"/></svg>Rectangle Select</li>
          <li><svg class="ic16"><use href="#i-desel"/></svg>Deselect</li>
          <li class="cur"><svg class="ic16"><use href="#i-rect"/></svg>Rectangle Select</li>
        </ul>
        <div class="pfoot"><svg class="ic16"><use href="#i-undo"/></svg><svg class="ic16"><use href="#i-redo"/></svg></div>
      </aside>

      <aside class="panel layers">
        <div class="ptitle"><span>Layers</span><b class="pclose">x</b></div>
        <div class="lrow"><svg class="lthumb"><use href="#t-map"/></svg><span class="lname">Background</span><span class="lcheck"><svg viewBox="0 0 12 12"><path d="M2 6l3 3 5-6" stroke="#222" stroke-width="1.300" fill="none"/></svg></span></div>
        <div class="lspace"></div>
        <div class="pfoot lfoot">
          <svg class="ic16"><use href="#i-lnew"/></svg><svg class="ic16"><use href="#i-ldel"/></svg><svg class="ic16"><use href="#i-layers"/></svg><svg class="ic16"><use href="#i-lmerge"/></svg><svg class="ic16"><use href="#i-lup"/></svg><svg class="ic16"><use href="#i-ldown"/></svg><svg class="ic16"><use href="#i-lprop"/></svg>
        </div>
      </aside>
    </section>

    <div class="vscroll">
      <svg class="arrow" viewBox="0 0 10 6"><path d="M1 5l4-4 4 4" fill="none" stroke="#555" stroke-width="1.500"/></svg>
      <div class="vtrack"><div class="vthumb"></div></div>
      <svg class="arrow" viewBox="0 0 10 6"><path d="M1 1l4 4 4-4" fill="none" stroke="#555" stroke-width="1.500"/></svg>
    </div>
    <div class="hscroll">
      <svg class="arrow-h" viewBox="0 0 6 10"><path d="M5 1L1 5l4 4" fill="none" stroke="#555" stroke-width="1.500"/></svg>
      <div class="htrack"><div class="hthumb"></div></div>
      <svg class="arrow-h" viewBox="0 0 6 10"><path d="M1 1l4 4-4 4" fill="none" stroke="#555" stroke-width="1.500"/></svg>
    </div>
    <div class="scorner"></div>
  </main>

  <footer class="status">
    <svg class="ic14 st-ic"><use href="#i-rect"/></svg>
    <span class="st-msg">Selection top left: 12, 14. Bounding rectangle size: 882 × 882. Area: 777,924 pixels square</span>
    <div class="st-right">
      <svg class="ic16"><use href="#i-dim"/></svg><span class="st-dim">1760 × 1200</span>
      <svg class="ic16 st-gap"><use href="#i-pos"/></svg><span class="st-pos">1184, 895</span>
      <span class="st-px">px</span><span class="caret up st-caret"></span><span class="st-zoom">42%</span>
      <svg class="ic16 st-fit"><use href="#i-fit"/></svg>
      <svg class="ic16 st-zo"><use href="#i-zo"/></svg>
      <div class="slider"><span class="slider-tick"></span><span class="slider-thumb"></span></div>
      <svg class="ic16 st-zi"><use href="#i-zi"/></svg>
    </div>
  </footer>
  <div class="bottom-strip"></div>
</div>
</body>
</html>
```
FILE: styles.css
```css
* { box-sizing: border-box; }
html, body { margin: 0; padding: 0; }
body { width: 1920px; height: 1042px; overflow: hidden; background: #1e1e1e; color: #f2f2f2; font: 11px/1.2 "Noto Sans", "Liberation Sans", sans-serif; }
.defs { position: absolute; }
.app { display: flex; flex-direction: column; width: 1920px; height: 1042px; }
.ic14 { width: 14px; height: 14px; display: block; flex: none; }
.ic16 { width: 16px; height: 16px; display: block; flex: none; }
.ic18 { width: 18px; height: 18px; display: block; flex: none; }

/* title bar */
.titlebar { height: 50px; flex: none; background: #4f5b69; display: flex; position: relative; z-index: 3; }
.title-left { width: 358px; flex: none; display: flex; flex-direction: column; }
.title-row { height: 24px; display: flex; align-items: center; padding: 0 0 0 3px; gap: 8px; }
.title-row .ic16 { width: 13px; height: 13px; }
.title-text { font-size: 11.5px; color: #fff; }
.menu { margin-left: 4px; width: 338px; height: 26px; background: #1e1e1e; display: flex; align-items: center; padding-left: 9px; gap: 16px; font-size: 11px; }
.doc-tab { width: 72px; height: 76px; position: relative; flex: none; padding: 22px 0 0 0; }
.star { position: absolute; left: 3px; top: 4px; font-size: 11px; line-height: 16px; color: #d9c23c; }
.thumb-plan { display: block; width: 68px; height: 50px; border: 1px solid #ddd; }
.doc-active { width: 77px; margin-left: 0; background: #12507f; border: 1px solid #0a78d7; padding: 26px 0 0 4px; }
.doc-active .star { left: 4px; top: 3px; }
.thumb-map { display: block; width: 68px; height: 46px; }
.tab-more { width: 16px; padding: 37px 0 0 5px; flex: none; }
.tab-more-caret { display: block; width: 0; height: 0; border: 4px solid transparent; border-top: 5px solid #4aa3ec; border-bottom: 0; box-shadow: 0 -2px 0 #4aa3ec; }
.title-right { margin-left: auto; display: flex; flex-direction: column; width: 144px; }
.winbtns { height: 26px; display: flex; align-items: flex-start; padding: 4px 0 0 23px; gap: 34px; }
.win { width: 11px; height: 11px; display: block; }
.wintools { display: flex; align-items: center; gap: 2px; }
.toggle { width: 21px; height: 21px; background: #2d5f8c; border: 1px solid #0a78d7; display: flex; align-items: center; justify-content: center; }
.tsep { width: 1px; height: 13px; background: #3d4754; margin: 0 5px 0 2px; }
.gear { margin-right: 5px; }
.help { width: 15px; height: 15px; border-radius: 50%; background: #2b55b8; border: 1px solid #cfe0f5; color: #fff; font: bold 11px/13px "Liberation Sans", sans-serif; text-align: center; }

/* toolbars */
.toolbar { flex: none; display: flex; align-items: center; background: #1e1e1e; }
.tb1 { height: 28px; padding-left: 4px; }
.tb2 { height: 27px; padding-left: 9px; }
.b { width: 23px; height: 23px; display: flex; align-items: center; justify-content: center; flex: none; }
.b22 { width: 22px; }
.b16 { width: 16px; }
.on { background: #12507f; border: 1px solid #0a78d7; }
.sep { height: 14px; flex: none; position: relative; }
.sep::after { content: ""; position: absolute; left: 50%; top: 0; width: 1px; height: 100%; background: #4a4a4a; }
.s12 { width: 12px; }
.s11 { width: 11px; }
.s-a { width: 15px; }
.s-b { width: 15px; }
.s-c { width: 16px; }
.tool-label { width: 30px; font-size: 11px; }
.caret { display: block; width: 0; height: 0; flex: none; border: 3px solid transparent; border-top: 3px solid #eee; border-bottom: 0; }
.caret.up { border-top: 0; border-bottom: 3px solid #eee; }
.c-tool { margin-left: 8px; }
.ic-mode { width: 18px; height: 16px; display: block; flex: none; }
.mode-text { margin-left: 0; width: 44px; padding-left: 2px; font-size: 11px; }
.c-mode { margin-left: 9px; }
.c-aa { margin-left: 7px; }

/* stage */
.stage { flex: 1; display: grid; grid-template-columns: 17px 1887px 16px; grid-template-rows: 17px 876px 17px; }
.corner { background: #1e1e1e; border-top: 1px solid #6a6a6a; font-size: 10px; padding: 1px 0 0 2px; line-height: 14px; }
.ruler-h { grid-column: 2 / 4; background: #1e1e1e; border-top: 1px solid #6a6a6a; overflow: hidden; position: relative; }
.band-h { position: absolute; left: 485px; width: 368px; top: 0; bottom: 0; background: #2f8fe0; }
.hmarks { display: flex; margin-left: -22px; position: relative; width: 2100px; height: 16px; }
.hm { flex: none; width: 83.5px; height: 16px; padding-left: 2px; font-size: 9.5px; line-height: 11px; color: #fff;
  background:
    linear-gradient(#b8b8b8, #b8b8b8) 0 0 / 1px 100% no-repeat,
    linear-gradient(#b8b8b8, #b8b8b8) 41.75px 100% / 1px 8px no-repeat,
    repeating-linear-gradient(90deg, #9a9a9a 0 1px, transparent 1px 8.35px) 0 100% / 100% 4px no-repeat; }
.ruler-v { grid-row: 2 / 4; background: #1e1e1e; overflow: hidden; position: relative; border-right: 1px solid #3a3a3a; }
.band-v { position: absolute; top: 217px; height: 367px; left: 0; right: 0; background: #2f8fe0; }
.vmarks { position: relative; margin-top: -40.5px; }
.vm { height: 83.5px; width: 16px; padding-left: 2px;
  background:
    linear-gradient(#b8b8b8, #b8b8b8) 0 0 / 100% 1px no-repeat,
    linear-gradient(#b8b8b8, #b8b8b8) 100% 41.75px / 8px 1px no-repeat,
    repeating-linear-gradient(180deg, #9a9a9a 0 1px, transparent 1px 8.35px) 100% 0 / 4px 100% no-repeat; }
.vm span { display: inline-block; writing-mode: vertical-rl; transform: rotate(180deg); font-size: 9.5px; line-height: 11px; color: #fff; margin-top: 2px; }

.workspace { background: #2d2d2d; position: relative; overflow: hidden; padding: 210px 0 0 479px; }
.canvas { display: block; box-shadow: 0 0 0 1px #4a4a4a; }
.outline { fill: #fff; stroke: #1c1c1c; stroke-width: 2.6; stroke-linejoin: round; }
.thin { fill: none; stroke: #333; stroke-width: 1; }
.units path { fill: #e5e5e7; stroke: #444; stroke-width: 2.4; }
.units path.u2 { stroke: #6a6a6a; }
.units path.wh { fill: #fff; }
.units path.ln { fill: none; }
.units path.kiosk { fill: none; stroke: #222; stroke-width: 3; }
.units text { font: 19px "Liberation Sans", sans-serif; fill: #5c5c5c; text-anchor: middle; }
.gl { font: 15px "Liberation Sans", sans-serif; fill: #fff; text-anchor: middle; }
.gl.atm { font: bold 8.5px "Liberation Sans", sans-serif; }
.tiny { font: 2.2px "Liberation Sans", sans-serif; fill: #fff; text-anchor: middle; }
.sel1 { fill: none; stroke: #fff; stroke-width: 1; }
.sel2 { fill: none; stroke: #000; stroke-width: 1; stroke-dasharray: 4 4; }

/* panels */
.panel { position: absolute; background: #282828; box-shadow: 0 0 14px rgba(0,0,0,.35); display: flex; flex-direction: column; }
.ptitle { height: 31px; flex: none; background: #4f5b69; display: flex; align-items: center; justify-content: space-between; padding: 2px 1px 0 8px; font-size: 11.5px; color: #fff; }
.pclose { width: 19px; height: 19px; margin-top: 2px; background: #c64f50; color: #fff; font: bold 10px/19px "Liberation Sans", sans-serif; text-align: center; }
.tools { left: 5px; top: 6px; width: 51px; height: 282px; }
.toolgrid { display: grid; grid-template-columns: 25px 24px; grid-auto-rows: 24.8px; padding: 1px 0 0 1px; }
.tc { display: flex; align-items: center; justify-content: center; }
.tc.on { width: 24px; height: 24px; }
.tc-wide { grid-column: 1 / 3; }
.ic-shapes { width: 34px; height: 18px; display: block; }
.colors { left: 5px; top: 623px; width: 209px; height: 248px; }
.cbody { padding: 8px 9px 0 8px; display: flex; flex-direction: column; }
.crow { display: flex; gap: 7px; align-items: flex-start; height: 28px; }
.select { width: 112px; height: 24px; background: #e1e1e1; border: 1px solid #adadad; color: #333; display: flex; align-items: center; justify-content: space-between; padding: 0 5px 0 4px; font-size: 11px; }
.chev { width: 9px; height: 6px; display: block; }
.morebtn { width: 73px; height: 21px; background: #e1e1e1; border: 1px solid #adadad; color: #444; font-size: 11px; line-height: 18px; text-align: center; letter-spacing: .4px; }
.cmain { display: flex; height: 141px; }
.cleft { width: 50px; flex: none; display: flex; flex-direction: column; justify-content: space-between; }
.swatches { position: relative; height: 46px; }
.sw-white { position: absolute; left: 0; top: 0; width: 28px; height: 28px; background: #fff; border: 1px solid #000; }
.sw-black { position: absolute; left: 17px; top: 17px; width: 27px; height: 27px; background: #000; border: 1px solid #fff; }
.sw-swap { position: absolute; left: 31px; top: 3px; width: 9px; height: 9px; }
.sw-r1 { position: absolute; left: 8px; top: 36px; width: 7px; height: 7px; background: #fff; border: 1px solid #888; }
.sw-r2 { position: absolute; left: 1px; top: 30px; width: 8px; height: 8px; background: #333; border: 1px solid #eee; }
.cactions { display: flex; align-items: center; gap: 7px; height: 16px; }
.wheel { width: 141px; height: 141px; flex: none; border-radius: 50%; position: relative;
  background: radial-gradient(closest-side, #fff, rgba(255,255,255,0)), conic-gradient(from 90deg, #f00, #ff0, #0f0, #0ff, #00f, #f0f, #f00); }
.wheel-dot { position: absolute; left: 66px; top: 66px; width: 9px; height: 9px; border: 1px solid #111; border-radius: 50%; }
.palette { margin-top: 7px; border-top: 1px solid #d8d8d8; padding-top: 4px; display: grid; grid-template-columns: repeat(16, 12px); grid-auto-rows: 12px; }
.palette i { display: block; }
.history { left: 1673px; top: 6px; width: 208px; height: 237px; }
.hlist { list-style: none; margin: 0; padding: 1px 0 0; height: 180px; flex: none; }
.hlist li { height: 20px; display: flex; align-items: center; gap: 0; padding-left: 3px; font-size: 11px; }
.hlist li.cur { background: #125080; border: 1px solid #0a78d7; padding-left: 2px; }
.pfoot { flex: 1; background: #1e1e1e; border-top: 1px solid #5a5a5a; display: flex; align-items: center; gap: 7px; padding-left: 5px; }
.layers { left: 1673px; top: 634px; width: 208px; height: 237px; }
.lrow { height: 51px; flex: none; background: #125080; border: 1px solid #0a78d7; display: flex; align-items: center; padding-left: 5px; }
.lthumb { width: 41px; height: 29px; display: block; border: 1px solid #c8c8c8; flex: none; }
.lname { margin-left: 6px; font-size: 11px; }
.lcheck { margin-left: auto; margin-right: 3px; width: 13px; height: 13px; background: #fff; border: 1px solid #222; display: block; }
.lcheck svg { display: block; width: 11px; height: 11px; }
.lspace { height: 130px; flex: none; }
.lfoot { padding-left: 5px; }

/* scrollbars */
.vscroll { background: #f0f0f0; display: flex; flex-direction: column; align-items: center; padding: 6px 0; }
.arrow { width: 9px; height: 6px; display: block; flex: none; }
.vtrack { flex: 1; width: 16px; margin: 6px 0; padding-top: 200px; }
.vthumb { height: 420px; background: #cdcdcd; }
.hscroll { grid-column: 2; background: #f0f0f0; display: flex; align-items: center; padding: 0 5px; }
.arrow-h { width: 6px; height: 9px; display: block; flex: none; }
.htrack { flex: 1; height: 17px; padding-left: 511px; margin: 0 5px; }
.hthumb { width: 925px; height: 17px; background: #cdcdcd; }
.scorner { background: #2d2d2d; }

/* status */
.status { height: 25px; flex: none; background: #1e1e1e; display: flex; align-items: center; padding-left: 2px; font-size: 11px; white-space: nowrap; }
.st-ic { margin-right: 1px; }
.st-right { margin-left: auto; display: flex; align-items: center; padding-right: 20px; }
.st-dim { width: 66px; }
.st-gap { margin-left: 14px; }
.st-pos { width: 66px; }
.st-px { width: 18px; margin-left: 12px; }
.st-caret { margin-left: 5px; }
.st-zoom { width: 24px; margin-left: 9px; }
.st-fit { margin-left: 14px; }
.st-zo { margin-left: 13px; }
.slider { width: 89px; height: 16px; margin-left: 8px; position: relative; background: linear-gradient(#ddd, #ddd) 0 50% / 100% 1px no-repeat; }
.slider-thumb { position: absolute; left: 37px; top: 0; width: 9px; height: 15px; background: #d4d4d4; clip-path: polygon(0 0, 100% 0, 100% 70%, 50% 100%, 0 70%); }
.slider-tick { position: absolute; left: 46px; top: 3px; width: 1px; height: 10px; background: #ddd; }
.st-zi { margin-left: 7px; }
.bottom-strip { height: 2px; flex: none; background: #38414c; }
```
